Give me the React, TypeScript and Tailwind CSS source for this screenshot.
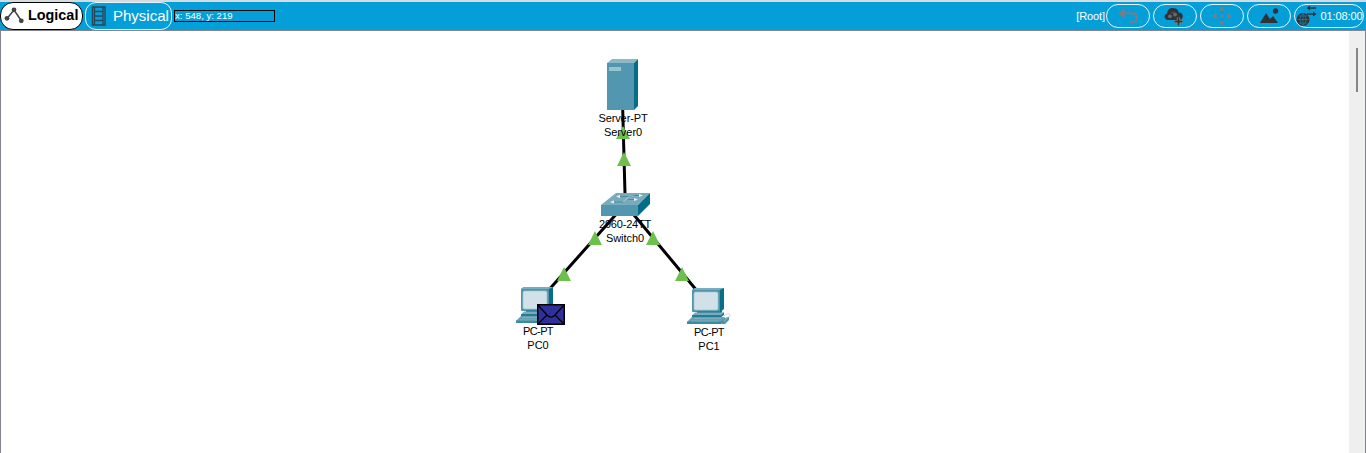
import type { ReactNode } from "react";

const font = "font-['Liberation_Sans',Arial,sans-serif]";

function ToolButton({ label, wide, children }: { label: string; wide?: boolean; children: ReactNode }) {
  return (
    <button
      aria-label={label}
      className={`${wide ? "w-[70px]" : "w-11"} flex h-6 shrink-0 items-center justify-center rounded-[12px] border border-white/90`}
    >
      {children}
    </button>
  );
}

function Toolbar() {
  return (
    <header className="flex h-[30px] shrink-0 border-t-2 border-[#d5dce0] bg-[#049fd9]">
      <button className="flex h-7 w-[83px] shrink-0 items-center rounded-[13px] border border-black bg-white pl-[3px] text-[14.4px] font-bold text-black">
        <svg className="mr-[3px] h-5 w-[21px] shrink-0" viewBox="0 0 21 20">
          <path d="M3 12.5 10 4l7.5 11" fill="none" stroke="#444448" strokeWidth="1.5" />
          <circle cx="3" cy="12.3" r="2.4" fill="#444448" />
          <circle cx="10" cy="3.8" r="2.4" fill="#444448" />
          <circle cx="17.3" cy="14.8" r="2.4" fill="#444448" />
        </svg>
        Logical
      </button>
      <button className="ml-[2px] flex h-7 w-[87px] shrink-0 items-center rounded-[11px] border border-white/90 pl-[5px] text-[15px] text-white">
        <svg className="mr-[6px] h-5 w-[16px] shrink-0" viewBox="0 0 16 20">
          <path d="M1.5 1h12.5v18H1.5zM3.5 1v18M12 1v18M3.5 5.5H12M3.5 10H12M3.5 14.5H12" fill="none" stroke="#27485a" strokeWidth="1.4" />
        </svg>
        Physical
      </button>
      <div className="mt-2 ml-[2px] flex h-3 w-[101px] items-center border border-black text-[9.6px] leading-none whitespace-pre text-white">
        x: 548, y: 219
      </div>
      <div className="mt-[2px] mr-[2px] ml-auto flex h-6 items-center gap-[3px] text-white">
        <span className="-mr-[2px] text-[11px] tracking-[-0.1px]">[Root]</span>
        <ToolButton label="Back">
          <svg className="h-5 w-6 shrink-0" viewBox="0 0 24 20">
            <path d="M8.5 2 2 7.3l6.5 5.2z" fill="#7d7d80" />
            <path d="M7 7.3h9.5c5.4 0 5.8 8.5.5 8.8h-3" fill="none" stroke="#7d7d80" strokeWidth="2" />
          </svg>
        </ToolButton>
        <ToolButton label="New cluster">
          <svg className="h-[22px] w-6 shrink-0" viewBox="0 0 24 22">
            <path d="M5.5 15C.5 15 .5 9 4.3 8.5c-.1-4 3.2-6.3 6-5.3 3-.4 5.3 1.6 5.3 4.3 5.1.2 5.6 6.1 1.4 7.5z" fill="#303238" />
            <circle cx="7" cy="11.3" r="1.9" fill="#686a6e" />
            <circle cx="12" cy="9.5" r="1.9" fill="#686a6e" />
            <path d="M8 8 11 6.8" stroke="#575a60" />
            <path d="M11.5 16.5h8m-4-4v8" stroke="#9a9ea1" strokeWidth="3.2" />
            <path d="M11.5 16.5h8m-4-4v8" stroke="#303238" strokeWidth="2" />
          </svg>
        </ToolButton>
        <ToolButton label="Move object">
          <svg className="h-5 w-5 shrink-0" viewBox="0 0 20 20">
            <path d="M10 0 13 4.5H7zM10 20 7 15.5h6zM0 10l4.5-3v6zM20 10l-4.5-3v6zM9 9h2v2H9z" fill="#7d7d80" />
            <path d="M9 6h2v1H9zM9 13h2v1H9zM6 9h1v2H6zM13 9h1v2h-1z" fill="#477f98" />
          </svg>
        </ToolButton>
        <ToolButton label="Set background">
          <svg className="h-5 w-5 shrink-0" viewBox="0 0 20 20">
            <path d="m1 17 6-10 4 6 3-3 5 7z" fill="#303238" />
            <circle cx="16.5" cy="5" r="2.7" fill="#303238" />
          </svg>
        </ToolButton>
        <ToolButton label="Environment time" wide>
          <svg className="mr-[3px] h-6 w-[22px] shrink-0" viewBox="0 0 22 24">
            <circle cx="8" cy="15.5" r="6.5" fill="#303238" />
            <ellipse cx="8" cy="15.5" rx="2.8" ry="5.5" fill="none" stroke="#168fbc" strokeWidth=".6" />
            <path d="M2.3 15.5h11.4M3.5 12h9M3.5 19h9M8 9.8v11.4" stroke="#168fbc" strokeWidth=".6" />
            <path d="M11.5 4 15 1.5v1.7h6v1.6h-6v1.7zM21.5 10 18 7.5v1.7h-6v1.6h6v1.7z" fill="#303238" />
          </svg>
          <span className="text-[11px] tracking-[-0.1px]">01:08:00</span>
        </ToolButton>
      </div>
    </header>
  );
}

function Links() {
  return (
    <svg className="absolute top-0 left-0 h-[422px] w-[1348px]" viewBox="1 31 1348 422">
      <path d="M622.7 109 625 194M615.5 215l-65 73M634 215l61.5 74" fill="none" stroke="#000" strokeWidth="3" />
      <path d="m623 126 7 13h-14zM624 152l7 14h-14zM595 231l7 14h-14zM564 267l7 14h-14zM653 231l7 14h-14zM682 267l7 14h-14z" fill="#6ec04c" />
    </svg>
  );
}

function Server() {
  return (
    <svg className="h-[52px] w-8" viewBox="0 0 32 52">
      <path d="m0 4 5-4h26l-4 4z" fill="#8ab9c8" />
      <path d="m27 4 4-4v47l-4 4z" fill="#046d8a" />
      <path d="M0 4h27v47H0z" fill="#5297af" />
      <path d="M2 8h12v4H2z" fill="#9ac3d0" />
    </svg>
  );
}

function Switch() {
  return (
    <svg className="h-6 w-[50px]" viewBox="0 0 50 24">
      <path d="M0 12 15 0h34L37 12z" fill="#78abbc" />
      <path d="M37 12 49 0v11L37 23z" fill="#036c88" />
      <path d="M0 12h37v11H0z" fill="#5297af" />
      <path d="M16 3.5h12M33 2.5h8M12 9h11M27 6.5h9" stroke="#4f899d" strokeWidth="1" />
      <path d="m19 2-4 1.5 4 1.5zM38 1l4 1.5-4 1.5zM13 7.5 9 9l4 1.5zM33 5l4 1.5L33 8z" fill="#edf4f6" />
      <path d="M28 3.5 22 9" stroke="#a9cbd5" strokeWidth="1" />
    </svg>
  );
}

function PC() {
  return (
    <svg className="h-[38px] w-11" viewBox="0 0 44 38">
      <path d="m5 2 3-2h29v21l-4 3z" fill="#096e87" />
      <path d="m5 2 3-2h29l-4 2z" fill="#78adbd" />
      <rect x="5" y="2" width="28" height="22" rx="1" fill="#5094ab" />
      <rect x="7" y="4" width="24" height="18" rx="1.5" fill="#d2e1e7" stroke="#9fc4d0" strokeWidth=".7" />
      <path d="M10 23.5h23l2-2v3L32 26H10z" fill="#126f88" />
      <path d="m5 27.5 3-3h29l-3 3z" fill="#78acbd" />
      <path d="M5 27h29l3-3v3l-4 3H5z" fill="#247b93" />
      <path d="m0 34 5-5h33l-4 5z" fill="#65a0b3" />
      <path d="M0 33.5h34l4-4v3L34 36H0z" fill="#398ba3" />
      <path d="M4 33h28M7 30.5h27" stroke="#8ab9c7" strokeWidth=".6" />
      <path d="M37 28c2-3 7-3 6 0-1 1-2 1-3 2" fill="none" stroke="#c8dbe1" strokeWidth="1" />
      <path d="m35 34 3-4 4-1v3l-4 4h-3z" fill="#4b91a8" />
      <path d="m36 34 3-4 2-.5-3 4z" fill="#85b5c4" />
    </svg>
  );
}

function Label({ model, name, position, modelSpacing }: { model: string; name: string; position: string; modelSpacing: string }) {
  return (
    <div className={`absolute ${position} flex -translate-x-1/2 flex-col items-center text-[11px] leading-[14px] whitespace-nowrap text-black`}>
      <span className={modelSpacing}>{model}</span>
      <span className="tracking-[-0.05px]">{name}</span>
    </div>
  );
}

function Workspace() {
  return (
    <main className="relative min-w-0 flex-1 overflow-hidden bg-white">
      <Links />
      <div className="absolute top-[28px] left-[606px]"><Server /></div>
      <div className="absolute top-[162px] left-[600px]"><Switch /></div>
      <div className="absolute top-[256px] left-[515px]"><PC /></div>
      <div className="absolute top-[257px] left-[686px]"><PC /></div>
      <svg className="absolute top-[273px] left-[536px] h-[21px] w-7" viewBox="0 0 28 21">
        <path d="M.75.75h26.5v19.5H.75z" fill="#30309a" stroke="#000" strokeWidth="1.5" />
        <path d="m1 1 9 10c3 3 5 3 8 0l9-10M1 20l9-9M27 20l-9-9" fill="none" stroke="#000" strokeWidth="1.2" />
      </svg>
      <Label model="Server-PT" name="Server0" modelSpacing="tracking-[-0.1px]" position="top-[80px] left-[622px]" />
      <Label model="2960-24TT" name="Switch0" modelSpacing="tracking-[-0.2px]" position="top-[186px] left-[624px]" />
      <Label model="PC-PT" name="PC0" modelSpacing="tracking-[-0.6px]" position="top-[293px] left-[537px]" />
      <Label model="PC-PT" name="PC1" modelSpacing="tracking-[-0.6px]" position="top-[294px] left-[708px]" />
    </main>
  );
}

export default function App() {
  return (
    <div className={`${font} flex h-[453px] w-[1366px] flex-col overflow-hidden bg-white`}>
      <Toolbar />
      <div className="flex min-h-0 flex-1 border-t border-r border-l border-[#858590]">
        <Workspace />
        <div className="flex w-4 shrink-0 justify-center bg-[#efefef] pt-[17px]">
          <div className="h-11 w-[2px] bg-[#858585]" />
        </div>
      </div>
    </div>
  );
}
